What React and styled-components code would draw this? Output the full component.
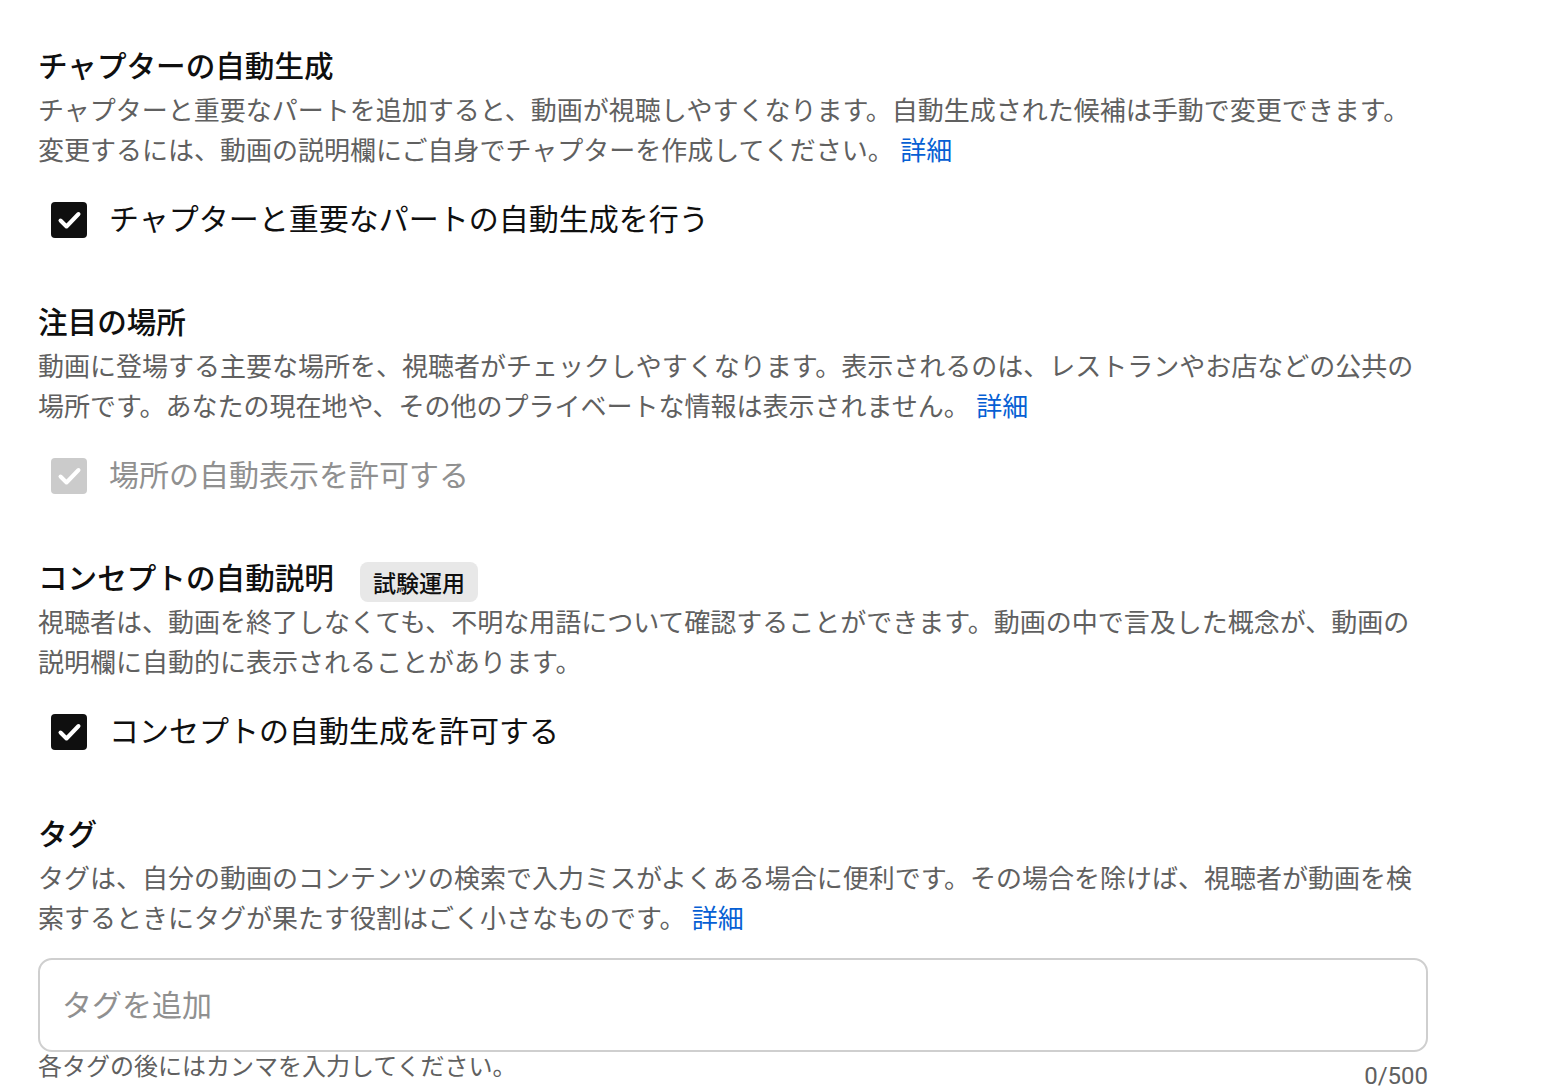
import React from 'react';
import styled, { createGlobalStyle } from 'styled-components';

const GlobalStyle = createGlobalStyle`
  html, body {
    margin: 0;
    padding: 0;
    background: #fff;
  }
  body {
    font-family: Roboto, "Noto Sans CJK JP", "Noto Sans", sans-serif;
    color: #0f0f0f;
  }
`;

const Page = styled.main`
  padding: 47px 0 0 38px;
  width: 1390px;
  display: flex;
  flex-direction: column;
  gap: 65px;
`;

const Section = styled.section`
  display: flex;
  flex-direction: column;
`;

const TitleRow = styled.div`
  display: flex;
  align-items: center;
  gap: 26px;
  height: 40px;
`;

const Title = styled.h3`
  margin: 0;
  font-size: 29.6px;
  line-height: 40px;
  font-weight: 500;
  color: #0f0f0f;
`;

const Badge = styled.span`
  display: inline-flex;
  align-items: center;
  height: 40px;
  padding: 0 13px;
  border-radius: 8px;
  background: #e8e8e8;
  font-size: 23px;
  font-weight: 500;
  color: #0f0f0f;
  margin-top: 6px;
`;

const Description = styled.p`
  margin: 4px 0 0;
  font-size: 26px;
  line-height: 40px;
  color: #606060;
`;

const Link = styled.a`
  color: #065fd4;
  text-decoration: none;
  cursor: pointer;
`;

const CheckRow = styled.label`
  display: flex;
  align-items: center;
  gap: 22px;
  margin: 31px 0 0 13px;
  height: 36px;
  cursor: ${({ $disabled }) => ($disabled ? 'default' : 'pointer')};
`;

const Box = styled.span`
  width: 36px;
  height: 36px;
  flex: none;
  border-radius: 4px;
  background: ${({ $disabled }) => ($disabled ? '#cbcbcb' : '#0f0f0f')};
  display: flex;
  align-items: center;
  justify-content: center;
`;

const CheckLabel = styled.span`
  font-size: 30px;
  line-height: 36px;
  color: ${({ $disabled }) => ($disabled ? '#909090' : '#0f0f0f')};
`;

const TagBox = styled.div`
  margin-top: 19px;
  height: 94px;
  box-sizing: border-box;
  border: 2px solid #cfcfcf;
  border-radius: 14px;
  display: flex;
  align-items: center;
  padding: 0 22px;
`;

const TagInput = styled.input`
  border: none;
  outline: none;
  width: 100%;
  font-family: inherit;
  font-size: 30px;
  color: #0f0f0f;
  background: transparent;
  padding: 0;
  &::placeholder {
    color: #909090;
  }
`;

const HelperRow = styled.div`
  display: flex;
  justify-content: space-between;
  align-items: flex-start;
`;

const Helper = styled.span`
  font-size: 24px;
  line-height: 30px;
  color: #606060;
`;

const Counter = styled.span`
  margin-top: 10px;
  font-size: 24px;
  line-height: 28px;
  color: #606060;
`;

const Check = ({ checked = true, disabled, children }) => (
  <CheckRow $disabled={disabled}>
    <Box $disabled={disabled}>
      {checked && (
        <svg width="36" height="36" viewBox="0 0 36 36">
          <polyline
            points="9.5,18.5 15.5,24.5 27.5,12"
            fill="none"
            stroke="#fff"
            strokeWidth="4"
            strokeLinecap="round"
            strokeLinejoin="round"
          />
        </svg>
      )}
    </Box>
    <CheckLabel $disabled={disabled}>{children}</CheckLabel>
  </CheckRow>
);

export default function App() {
  return (
    <>
      <GlobalStyle />
      <Page>
        <Section>
          <TitleRow>
            <Title>チャプターの自動生成</Title>
          </TitleRow>
          <Description>
            チャプターと重要なパートを追加すると、動画が視聴しやすくなります。自動生成された候補は手動で変更できます。
            <br />
            変更するには、動画の説明欄にご自身でチャプターを作成してください。 <Link>詳細</Link>
          </Description>
          <Check>チャプターと重要なパートの自動生成を行う</Check>
        </Section>

        <Section>
          <TitleRow>
            <Title>注目の場所</Title>
          </TitleRow>
          <Description>
            動画に登場する主要な場所を、視聴者がチェックしやすくなります。表示されるのは、レストランやお店などの公共の
            <br />
            場所です。あなたの現在地や、その他のプライベートな情報は表示されません。 <Link>詳細</Link>
          </Description>
          <Check disabled>場所の自動表示を許可する</Check>
        </Section>

        <Section>
          <TitleRow>
            <Title>コンセプトの自動説明</Title>
            <Badge>試験運用</Badge>
          </TitleRow>
          <Description>
            視聴者は、動画を終了しなくても、不明な用語について確認することができます。動画の中で言及した概念が、動画の
            <br />
            説明欄に自動的に表示されることがあります。
          </Description>
          <Check>コンセプトの自動生成を許可する</Check>
        </Section>

        <Section>
          <TitleRow>
            <Title>タグ</Title>
          </TitleRow>
          <Description>
            タグは、自分の動画のコンテンツの検索で入力ミスがよくある場合に便利です。その場合を除けば、視聴者が動画を検
            <br />
            索するときにタグが果たす役割はごく小さなものです。 <Link>詳細</Link>
          </Description>
          <TagBox>
            <TagInput placeholder="タグを追加" />
          </TagBox>
          <HelperRow>
            <Helper>各タグの後にはカンマを入力してください。</Helper>
            <Counter>0/500</Counter>
          </HelperRow>
        </Section>
      </Page>
    </>
  );
}
